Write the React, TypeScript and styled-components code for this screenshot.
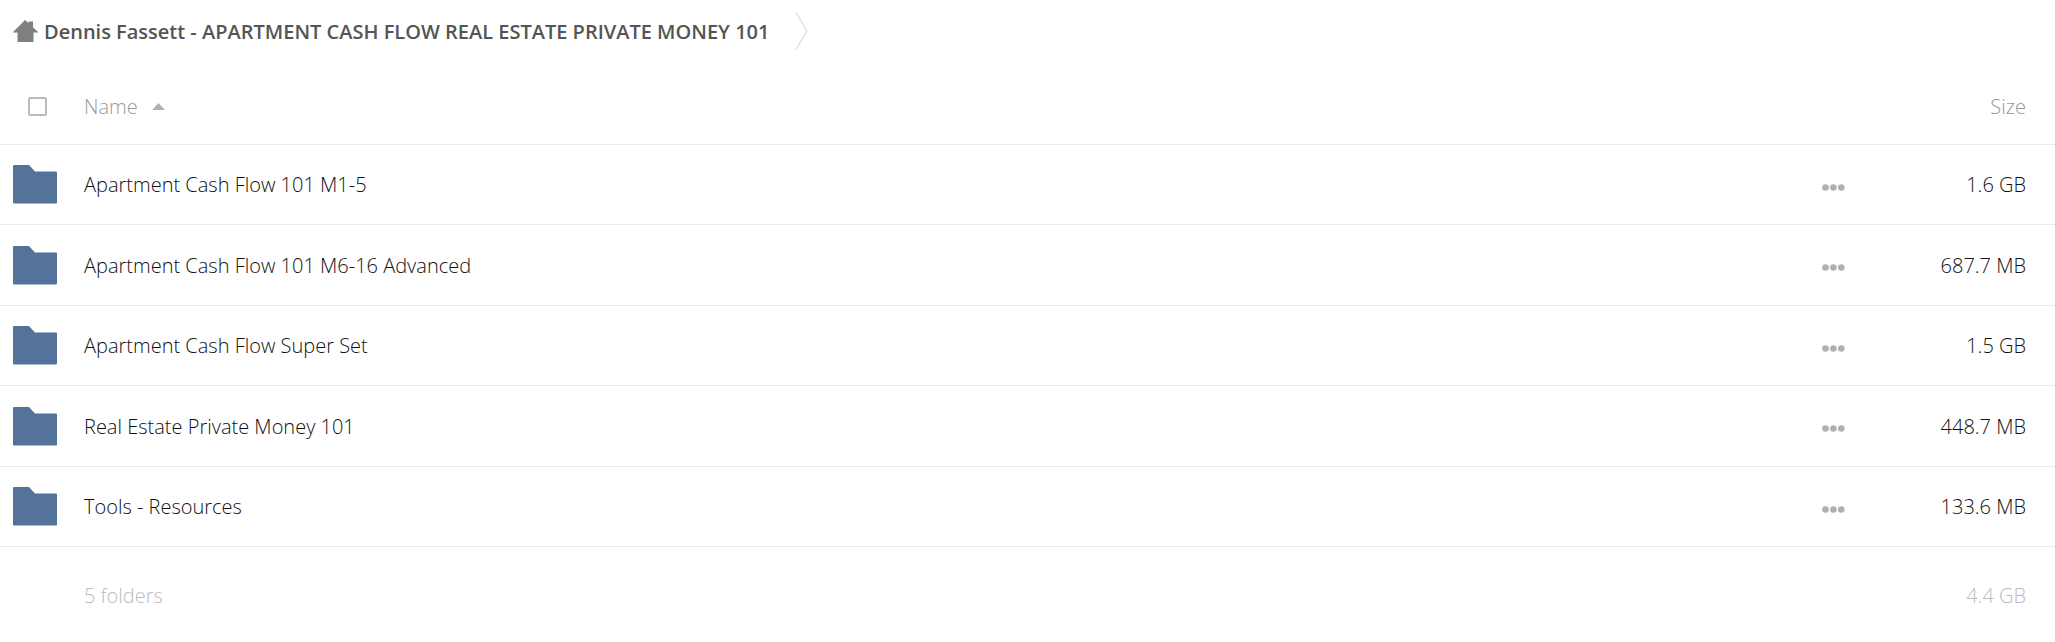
import React from "react";
import styled, { createGlobalStyle } from "styled-components";

const Global = createGlobalStyle`
  * { box-sizing: border-box; }
  body { margin: 0; background: #fff; color: #111; font-family: "Open Sans", sans-serif; font-size: 20px; font-weight: 300; }
`;

const Crumbs = styled.nav`
  display: flex;
  align-items: center;
  height: 62px;
  padding: 0 13px;
`;

const CrumbLink = styled.a`
  display: flex;
  align-items: center;
  gap: 6px;
  color: #555;
  font-weight: 600;
  text-decoration: none;
  white-space: nowrap;
`;

const Separator = styled.svg`
  display: block;
  margin-left: 26px;
`;

const Table = styled.table`
  width: 100%;
  border-collapse: separate;
  border-spacing: 0;
  table-layout: fixed;
`;

const Row = styled.tr`
  height: 80px;
  &:nth-child(even) { height: 81px; }
`;

const Cell = styled.td<{ $right?: boolean }>`
  padding: 0 ${(p) => (p.$right ? "29px" : "0")} 0 0;
  text-align: ${(p) => (p.$right ? "right" : "left")};
  border-bottom: 1px solid #ebebeb;
`;

const HeadCell = styled(Cell).attrs({ as: "th" })`
  height: 83px;
  padding-top: 6px;
  color: #999;
  font-weight: 300;
`;

const FootCell = styled(Cell)`
  height: 97px;
  color: #bbb;
  border: 0;
`;

const IconCol = styled.col` width: 84px; `;
const MenuCol = styled.col` width: 71px; `;
const SizeCol = styled.col` width: 172px; `;

const Check = styled.input`
  appearance: none;
  display: block;
  width: 19px;
  height: 19px;
  margin: 0 0 0 28px;
  border: 2px solid #bbb;
  border-radius: 2px;
  background: #fff;
`;

const SortButton = styled.button`
  display: flex;
  align-items: center;
  gap: 14px;
  padding: 0;
  border: 0;
  background: none;
  color: inherit;
  font: inherit;
`;

const NameLink = styled.a`
  color: inherit;
  text-decoration: none;
`;

const FolderIcon = styled.svg`
  display: block;
  margin-left: 13px;
`;

const MoreButton = styled.button`
  display: block;
  padding: 12px 10px 7px;
  border: 0;
  background: none;
  svg { display: block; }
`;

const folders = [
  { name: "Apartment Cash Flow 101 M1-5", size: "1.6 GB" },
  { name: "Apartment Cash Flow 101 M6-16 Advanced", size: "687.7 MB" },
  { name: "Apartment Cash Flow Super Set", size: "1.5 GB" },
  { name: "Real Estate Private Money 101", size: "448.7 MB" },
  { name: "Tools - Resources", size: "133.6 MB" },
];

export default function App() {
  return (
    <>
      <Global />
      <Crumbs aria-label="Breadcrumb">
        <CrumbLink href="#">
          <svg width="25" height="22" viewBox="0 0 25 22" fill="#808080" aria-hidden="true">
            <path d="M12 0 L15.5 3 V1.5 H20 V7.2 L25 12 V12.6 H20.5 V22 H4.5 V12.6 H0 V12 Z" />
          </svg>
          Dennis Fassett - APARTMENT CASH FLOW REAL ESTATE PRIVATE MONEY 101
        </CrumbLink>
        <Separator width="13" height="39" viewBox="0 0 13 39" fill="none" stroke="#d0d0d0" aria-hidden="true">
          <path d="M1 0.5 L12 19 L1 37.5" />
        </Separator>
      </Crumbs>
      <Table>
        <colgroup><IconCol /><col /><MenuCol /><SizeCol /></colgroup>
        <thead>
          <tr>
            <HeadCell><Check type="checkbox" aria-label="Select all" /></HeadCell>
            <HeadCell>
              <SortButton type="button">
                Name
                <svg width="13" height="7" viewBox="0 0 13 7" fill="#b0b0b0" aria-hidden="true"><path d="M0 7 L6.5 0 L13 7 Z" /></svg>
              </SortButton>
            </HeadCell>
            <HeadCell />
            <HeadCell $right>Size</HeadCell>
          </tr>
        </thead>
        <tbody>
          {folders.map((f) => (
            <Row key={f.name}>
              <Cell>
                <FolderIcon width="44" height="39" viewBox="0 0 44 39" fill="#54739b" aria-hidden="true">
                  <path d="M0 1 Q0 0 1 0 H16 L22 6.5 H43 Q44 6.5 44 7.5 V37.5 Q44 38.5 43 38.5 H1 Q0 38.5 0 37.5 Z" />
                </FolderIcon>
              </Cell>
              <Cell><NameLink href="#">{f.name}</NameLink></Cell>
              <Cell>
                <MoreButton type="button" aria-label={`More options for ${f.name}`}>
                  <svg width="23" height="7" viewBox="0 0 23 7" fill="#b0b0b0"><circle cx="3.5" cy="3.5" r="3.3" /><circle cx="11.4" cy="3.5" r="3.3" /><circle cx="19.3" cy="3.5" r="3.3" /></svg>
                </MoreButton>
              </Cell>
              <Cell $right>{f.size}</Cell>
            </Row>
          ))}
        </tbody>
        <tfoot>
          <tr><FootCell /><FootCell>5 folders</FootCell><FootCell /><FootCell $right>4.4 GB</FootCell></tr>
        </tfoot>
      </Table>
    </>
  );
}
